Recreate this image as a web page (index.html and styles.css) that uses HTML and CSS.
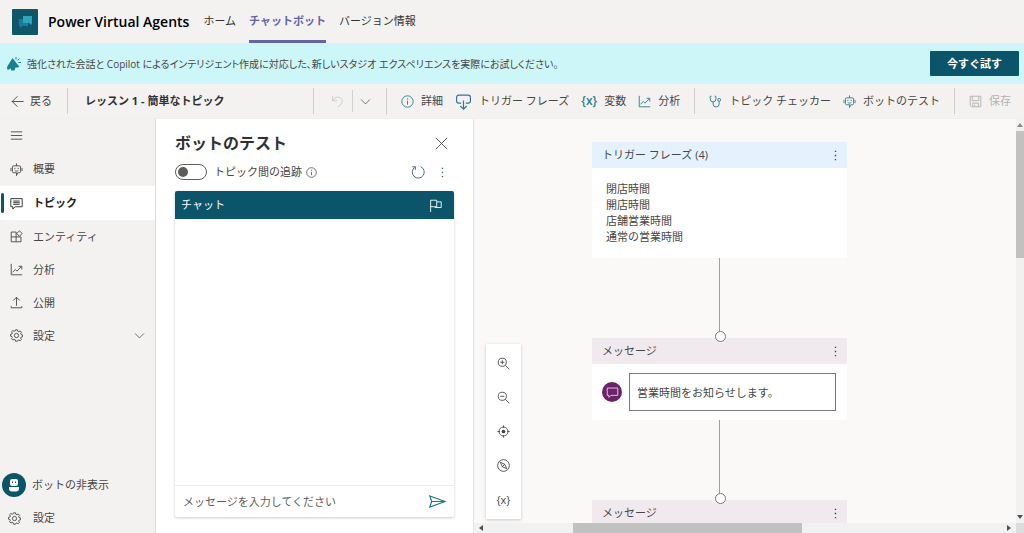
FILE: index.html
```html
<!DOCTYPE html>
<html lang="ja">
<head>
<meta charset="utf-8">
<meta name="viewport" content="width=device-width, initial-scale=1">
<title>Power Virtual Agents</title>
<link rel="stylesheet" href="styles.css">
</head>
<body>
<svg class="sprite" aria-hidden="true">
  <symbol id="i-back" viewBox="0 0 16 16"><path d="M15.500 8H1M8 1.500 1.500 8 8 14.500"/></symbol>
  <symbol id="i-undo" viewBox="0 0 16 16"><path d="M2 1.500v5.500h5.500M2.200 6.800C5 2.500 9 1.800 11.500 3.500c3 2 3 5.500.8 7.700L8.500 15"/></symbol>
  <symbol id="i-down" viewBox="0 0 16 16"><path d="m1.500 5 6.500 6.500L14.500 5"/></symbol>
  <symbol id="i-info" viewBox="0 0 16 16"><circle cx="8" cy="8" r="7"/><path d="M8 7v5M8 4v1.500"/></symbol>
  <symbol id="i-trigger" viewBox="0 0 16 16"><path d="M5.800 9.500H3.500a2 2 0 0 1-2-2V4a2 2 0 0 1 2-2h9a2 2 0 0 1 2 2v3.500a2 2 0 0 1-2 2h-2.300M8 7v8M5 12.200l3 3 3-3"/></symbol>
  <symbol id="i-chart" viewBox="0 0 16 16"><path d="M1.500 1v13.500H15M3 11.500 6.500 8l2 2 5.500-5.500M10.500 4H14.500v4"/></symbol>
  <symbol id="i-check" viewBox="0 0 16 16"><path d="M3 1.500H1.500V5a3.500 3.500 0 0 0 7 0V1.500H7M5 8.500v2.500a3.700 3.700 0 0 0 7.500 0V8"/><circle cx="12.500" cy="6" r="1.800"/></symbol>
  <symbol id="i-bot" viewBox="0 0 16 16"><path d="M8 .5v3M4.500 3.500h7a1.500 1.500 0 0 1 1.500 1.500v5.500a1.500 1.500 0 0 1-1.500 1.500H9.500L8 15.500V12H4.500A1.500 1.500 0 0 1 3 10.500V5a1.500 1.500 0 0 1 1.500-1.500ZM1.200 6v4M14.800 6v4M6 6v1.500M10 6v1.500M5.800 9.300c1.300.9 3 .9 4.400 0"/></symbol>
  <symbol id="i-save" viewBox="0 0 16 16"><path d="M1.500 1.500h13v13H3l-1.500-1.500ZM4 1.500V7h8V1.500M4.500 14.500V10h7v4.500M7 12v2.500"/></symbol>
  <symbol id="i-menu" viewBox="0 0 16 16"><path d="M1 3.500h14M1 8h14M1 12.500h14"/></symbol>
  <symbol id="i-topic" viewBox="0 0 16 16"><path d="M1 2h14v10H6.500L3.500 14.800V12H1ZM4 5h8M4 7h8M4 9h8"/></symbol>
  <symbol id="i-entity" viewBox="0 0 16 16"><path d="M7.500 2.500h-6v12h12V8.500M1.500 8.500h12M7.500 2.500v12M11.500 1 15 4.300l-3.500 3.500L8.300 4.300Z"/></symbol>
  <symbol id="i-publish" viewBox="0 0 16 16"><path d="M8 12V1.500M4 5.500l4-4 4 4M1.500 12.500v2h13v-2"/></symbol>
  <symbol id="i-gear" viewBox="0 0 16 16"><path d="M6.800 1h2.400l.4 1.900 1.300.5 1.600-1 1.600 1.700-1 1.600.5 1.200 1.900.4v2.300l-1.900.4-.5 1.300 1 1.600-1.600 1.600-1.600-1-1.300.5L9.200 15H6.800l-.4-1.900-1.300-.5-1.600 1-1.600-1.700 1-1.600L2.400 9.200.6 8.800V6.600l1.800-.4L2.900 5l-1-1.600 1.600-1.600 1.600 1 1.300-.5Z"/><circle cx="8" cy="8" r="2.600"/></symbol>
  <symbol id="i-close" viewBox="0 0 16 16"><path d="m1 1 14 14M15 1 1 15"/></symbol>
  <symbol id="i-refresh" viewBox="0 0 16 16"><path d="M4.500 2.500A6.800 6.800 0 1 0 11 1.900M1.500 2h3.500v3.500"/></symbol>
  <symbol id="i-dots" viewBox="0 0 16 16"><path class="solid" d="M7 1h2v2H7zM7 7h2v2H7zM7 13h2v2H7z"/></symbol>
  <symbol id="i-flag" viewBox="0 0 16 16"><path d="M2 16V1.500h7.500v8H2M9.500 3.500H15v7H7.500v-1"/></symbol>
  <symbol id="i-send" viewBox="0 0 16 16"><path d="M.8 2.800 15.200 8 .8 13.200 2.500 8ZM2.500 8h12"/></symbol>
  <symbol id="i-zoomin" viewBox="0 0 16 16"><circle cx="6.500" cy="6.500" r="5"/><path d="m10.200 10.200 5 5M4 6.500h5M6.500 4v5"/></symbol>
  <symbol id="i-zoomout" viewBox="0 0 16 16"><circle cx="6.500" cy="6.500" r="5"/><path d="m10.200 10.200 5 5M4 6.500h5"/></symbol>
  <symbol id="i-target" viewBox="0 0 16 16"><circle cx="8" cy="8" r="5.500"/><circle class="solid" cx="8" cy="8" r="2.300"/><path d="M8 .5v3M8 12.500v3M.5 8h3M12.500 8h3"/></symbol>
  <symbol id="i-compass" viewBox="0 0 16 16"><circle cx="8" cy="8" r="7.200"/><path d="m4 4 5.500 2.500L12 12 6.500 9.500ZM6.500 9.500l3-3"/></symbol>
  <symbol id="i-message" viewBox="0 0 16 16"><path d="M1.500 2.500h13v9H6L3.500 14v-2.500h-2Z"/></symbol>
</svg>

<header class="topbar">
  <svg class="logo" viewBox="0 0 26 26" aria-hidden="true"><rect class="logo-bg" width="26" height="26" rx="1"/><path class="logo-back" d="M7 10h9v7h-6l-2 2v-2H7z"/><path class="logo-front" d="M11 7h9v7l-1 2-2-2h-6z"/></svg>
  <h1 class="brand">Power Virtual Agents</h1>
  <nav class="tabs">
    <a href="#home">ホーム</a>
    <a href="#bots" class="current" aria-current="page">チャットボット</a>
    <a href="#about">バージョン情報</a>
  </nav>
</header>

<section class="banner">
  <svg class="horn" viewBox="0 0 16 16" aria-hidden="true"><path d="M6.500 2 13.500 11 5 12.500 1.500 14 1 11Z"/><path d="M5 12v2.500h3.500l1-3"/><path class="rays" d="M10 3.500V1M11.500 4.500 13.500 2.500M12.500 6.500H15"/></svg>
  <p>強化された会話と Copilot によるインテリジェント作成に対応した、新しいスタジオ エクスペリエンスを実際にお試しください。</p>
  <button class="primary" type="button">今すぐ試す</button>
</section>

<div class="toolbar">
  <button class="tool back" type="button"><svg class="icon"><use href="#i-back"/></svg>戻る</button>
  <h2 class="doc-title">レッスン 1 - 簡単なトピック</h2>
  <div class="history">
    <button class="tool undo" type="button" aria-label="元に戻す"><svg class="icon"><use href="#i-undo"/></svg></button>
    <button class="tool more" type="button" aria-label="履歴"><svg class="icon small"><use href="#i-down"/></svg></button>
  </div>
  <div class="group">
    <button class="tool" type="button"><svg class="icon teal"><use href="#i-info"/></svg>詳細</button>
    <button class="tool" type="button"><svg class="icon large teal"><use href="#i-trigger"/></svg>トリガー フレーズ</button>
    <button class="tool" type="button"><span class="braces">{x}</span>変数</button>
    <button class="tool" type="button"><svg class="icon teal"><use href="#i-chart"/></svg>分析</button>
  </div>
  <div class="group">
    <button class="tool" type="button"><svg class="icon teal"><use href="#i-check"/></svg>トピック チェッカー</button>
    <button class="tool" type="button"><svg class="icon teal"><use href="#i-bot"/></svg>ボットのテスト</button>
  </div>
  <div class="group">
    <button class="tool" type="button" disabled><svg class="icon"><use href="#i-save"/></svg>保存</button>
  </div>
</div>

<div class="workspace">
  <nav class="sidebar">
    <button class="side menu" type="button" aria-label="メニュー"><svg class="icon"><use href="#i-menu"/></svg></button>
    <a class="side tall" href="#overview"><svg class="icon"><use href="#i-bot"/></svg>概要</a>
    <a class="side tall active" href="#topics" aria-current="page"><svg class="icon"><use href="#i-topic"/></svg>トピック</a>
    <a class="side" href="#entities"><svg class="icon"><use href="#i-entity"/></svg>エンティティ</a>
    <a class="side" href="#analytics"><svg class="icon"><use href="#i-chart"/></svg>分析</a>
    <a class="side" href="#publish"><svg class="icon"><use href="#i-publish"/></svg>公開</a>
    <a class="side" href="#manage"><svg class="icon"><use href="#i-gear"/></svg>設定<svg class="icon small end"><use href="#i-down"/></svg></a>
    <div class="side-foot">
      <button class="side hide-bot" type="button"><svg class="avatar" viewBox="0 0 24 24"><circle cx="12" cy="12" r="12"/><rect class="face" x="8" y="6" width="8" height="7" rx="2"/><path class="face" d="M7 14h10v1.500a3 3 0 0 1-3 3h-4a3 3 0 0 1-3-3z"/><path class="eyes" d="M10 8.500h1v1.500h-1zM13 8.500h1v1.500h-1z"/></svg>ボットの非表示</button>
      <a class="side" href="#settings"><svg class="icon"><use href="#i-gear"/></svg>設定</a>
    </div>
  </nav>

  <section class="tester">
    <div class="tester-head">
      <h2>ボットのテスト</h2>
      <button class="ghost" type="button" aria-label="閉じる"><svg class="icon"><use href="#i-close"/></svg></button>
    </div>
    <div class="track">
      <input class="switch" id="track" type="checkbox" role="switch">
      <label for="track">トピック間の追跡</label>
      <svg class="icon info"><use href="#i-info"/></svg>
      <button class="ghost refresh" type="button" aria-label="リセット"><svg class="icon"><use href="#i-refresh"/></svg></button>
      <button class="ghost dots" type="button" aria-label="その他"><svg class="icon small"><use href="#i-dots"/></svg></button>
    </div>
    <div class="chat">
      <div class="chat-head"><h3>チャット</h3><button class="ghost" type="button" aria-label="フラグ"><svg class="icon"><use href="#i-flag"/></svg></button></div>
      <div class="chat-log"></div>
      <form class="composer">
        <input type="text" placeholder="メッセージを入力してください" aria-label="メッセージ">
        <button class="ghost send" type="button" aria-label="送信"><svg class="icon large"><use href="#i-send"/></svg></button>
      </form>
    </div>
  </section>

  <main class="stage">
    <div class="canvas">
      <div class="palette">
        <button class="ghost" type="button" aria-label="拡大"><svg class="icon"><use href="#i-zoomin"/></svg></button>
        <button class="ghost" type="button" aria-label="縮小"><svg class="icon"><use href="#i-zoomout"/></svg></button>
        <button class="ghost" type="button" aria-label="中央"><svg class="icon"><use href="#i-target"/></svg></button>
        <button class="ghost" type="button" aria-label="ミニマップ"><svg class="icon"><use href="#i-compass"/></svg></button>
        <button class="ghost var" type="button">{x}</button>
      </div>
      <div class="flow">
        <article class="node">
          <header class="node-head blue"><h3>トリガー フレーズ (4)</h3><button class="ghost" type="button" aria-label="その他"><svg class="icon small"><use href="#i-dots"/></svg></button></header>
          <ul class="phrases"><li>閉店時間</li><li>開店時間</li><li>店舗営業時間</li><li>通常の営業時間</li></ul>
        </article>
        <div class="link"></div>
        <article class="node">
          <header class="node-head"><h3>メッセージ</h3><button class="ghost" type="button" aria-label="その他"><svg class="icon small"><use href="#i-dots"/></svg></button></header>
          <div class="message">
            <span class="badge"><svg class="icon"><use href="#i-message"/></svg></span>
            <input type="text" value="営業時間をお知らせします。" aria-label="メッセージ本文">
          </div>
        </article>
        <div class="link"></div>
        <article class="node">
          <header class="node-head"><h3>メッセージ</h3><button class="ghost" type="button" aria-label="その他"><svg class="icon small"><use href="#i-dots"/></svg></button></header>
        </article>
      </div>
    </div>
    <div class="bar vertical" aria-hidden="true"><i class="arrow up"></i><i class="thumb"></i><i class="arrow down"></i></div>
    <div class="bar horizontal" aria-hidden="true"><i class="arrow left"></i><i class="thumb"></i><i class="arrow right"></i></div>
    <div class="corner"></div>
  </main>
</div>
</body>
</html>
```

FILE: styles.css
```css
* { box-sizing: border-box; }

body {
  margin: 0;
  height: 100vh;
  display: flex;
  flex-direction: column;
  overflow: hidden;
  background: #f3f2f1;
  color: #484644;
  font: 11px/16px "Open Sans", "Noto Sans CJK JP", sans-serif;
}

h1, h2, h3, p, ul { margin: 0; padding: 0; font-size: inherit; font-weight: 400; }
ul { list-style: none; }
a { color: inherit; text-decoration: none; }
button, input { font: inherit; color: inherit; }
button { border: 0; background: none; padding: 0; }

.sprite { display: none; }
.icon {
  width: 13px;
  height: 13px;
  flex: none;
  display: block;
  fill: none;
  stroke: currentColor;
  stroke-width: 1.1;
}
.icon.small { width: 11px; height: 11px; }
.icon.large { width: 17px; height: 17px; }
.icon.teal { color: #2c7c8b; }
.solid { fill: currentColor; stroke: none; }
.ghost { display: grid; place-items: center; }

/* Top bar */
.topbar { flex: none; height: 43px; display: flex; align-items: center; padding: 0 12px; }
.logo { width: 26px; height: 26px; }
.logo-bg { fill: #0e5668; }
.logo-back { fill: #137f9c; }
.logo-front { fill: #2ba6c2; }
.brand { margin: 0 14px 0 10px; font-size: 14px; font-weight: 600; color: #000; }
.tabs { align-self: stretch; display: flex; gap: 13px; }
.tabs a { display: flex; align-items: center; border-bottom: 3px solid transparent; border-top: 1px solid transparent; color: #323130; }
.tabs .current { color: #6264a7; font-weight: 700; border-bottom-color: #6264a7; }

/* Banner */
.banner {
  flex: none;
  height: 41px;
  display: flex;
  align-items: center;
  padding: 0 5px 0 6px;
  background: #cdf6f8;
  font-size: 10px;
}
.horn { width: 16px; height: 16px; margin-right: 5px; fill: #16828c; }
.horn .rays { fill: none; stroke: #16828c; }
.banner p { flex: 1; font-feature-settings: "palt"; }
.primary {
  width: 89px;
  height: 25px;
  border-radius: 1px;
  background: #0b556a;
  color: #fff;
  font-size: 11px;
  font-weight: 700;
}

/* Toolbar */
.toolbar { flex: none; height: 34px; display: flex; align-items: center; padding-right: 13px; }
.tool { display: flex; align-items: center; gap: 7px; white-space: nowrap; }
.tool:disabled { color: #b3b0ad; }
.back { width: 67px; padding-left: 11px; gap: 6px; }
.doc-title {
  flex: 1;
  height: 26px;
  line-height: 26px;
  padding-left: 17px;
  border-left: 1px solid #d2d0ce;
  font-weight: 700;
  color: #323130;
}
.history { display: flex; align-items: center; height: 26px; border-left: 1px solid #d2d0ce; }
.undo { color: #c8c6c4; padding: 0 8px 0 17px; }
.more { height: 22px; padding: 0 15px 0 7px; border-left: 1px solid #d2d0ce; }
.group { display: flex; align-items: center; gap: 12px; height: 26px; padding: 0 14px; border-left: 1px solid #d2d0ce; }
.group:last-child { padding-right: 0; }
.braces { color: #2c7c8b; font-weight: 600; font-size: 12px; }

/* Workspace */
.workspace { flex: 1; min-height: 0; display: flex; border-top: 1px solid #f0efee; }

.sidebar { flex: none; width: 156px; display: flex; flex-direction: column; border-right: 1px solid #dddbd9; }
.side { flex: none; position: relative; width: 100%; height: 33px; display: flex; align-items: center; gap: 10px; padding: 0 10px; text-align: left; }
.side.tall { height: 34px; }
.side .end { margin-left: auto; }
.side.active { background: #fff; font-weight: 700; color: #252423; }
.side.active::before { content: ""; position: absolute; left: 1px; top: 7px; bottom: 7px; width: 3px; border-radius: 2px; background: #0b556a; }
.side-foot { margin-top: auto; }
.side-foot .side { height: 30px; padding-left: 8px; gap: 12px; }
.side-foot .hide-bot { height: 36px; padding-left: 2px; gap: 6px; }
.avatar { width: 24px; height: 24px; fill: #0b556a; }
.avatar .face { fill: #fff; }

/* Test panel */
.tester { flex: none; width: 318px; display: flex; flex-direction: column; padding: 13px 19px 16px; background: #fff; border-right: 1px solid #e6e4e2; }
.tester-head { display: flex; align-items: center; justify-content: space-between; height: 22px; padding-right: 6px; }
.tester-head h2 { font-size: 16px; font-weight: 700; color: #323130; }
.track { display: flex; align-items: center; height: 36px; margin-bottom: 1px; padding-right: 6px; }
.track label { margin: 0 4px 0 7px; }
.icon.info { width: 11px; height: 11px; }
.refresh { margin: 0 12px 0 auto; color: #40697a; }
.refresh .icon { width: 14px; height: 14px; }
.dots { color: #40697a; }
.switch {
  appearance: none;
  width: 32px;
  height: 16px;
  margin: 0;
  padding: 2px;
  border: 1px solid #605e5c;
  border-radius: 8px;
  background: #fff;
}
.switch::before { content: ""; display: block; width: 10px; height: 10px; border-radius: 50%; background: #605e5c; }
.chat { flex: 1; display: flex; flex-direction: column; box-shadow: 0 1px 3px #0003; border-radius: 2px; }
.chat-head { display: flex; align-items: center; justify-content: space-between; height: 28px; padding: 0 12px 0 6px; background: #0b556a; color: #fff; border-radius: 2px 2px 0 0; }
.chat-log { flex: 1; }
.composer { display: flex; align-items: center; height: 32px; padding: 0 8px; border-top: 1px solid #edebe9; }
.composer input { flex: 1; min-width: 0; border: 0; padding: 0; background: none; outline: 0; }
.composer input::placeholder { color: #605e5c; opacity: 1; }
.send { color: #15798a; }

/* Authoring canvas */
.stage { flex: 1; min-width: 0; display: grid; grid-template: minmax(0, 1fr) 10px / minmax(0, 1fr) 8px; background: #faf9f8; }
.canvas { position: relative; overflow: hidden; padding: 23px 0 0 118px; }
.palette {
  position: absolute;
  left: 12px;
  bottom: 4px;
  width: 35px;
  height: 175px;
  padding: 2px 0;
  display: grid;
  grid-auto-rows: 1fr;
  background: #fff;
  box-shadow: 0 1px 3px #0003;
}
.var { font-size: 11px; }
.flow { width: 255px; }
.node { background: #fff; border-radius: 2px; }
.node-head { display: flex; align-items: center; justify-content: space-between; height: 26px; padding: 0 6px 0 10px; background: #f0eaef; }
.node-head.blue { background: #e5f2fd; }
.phrases { padding: 13px 14px; }
.link { position: relative; width: 1px; height: 80px; margin: 0 auto; background: #a19f9d; }
.link::after { content: ""; position: absolute; left: -4px; bottom: -4px; width: 9px; height: 9px; border: 1px solid #797775; border-radius: 50%; background: #fff; }
.message { display: flex; align-items: center; gap: 7px; padding: 9px 11px 9px 10px; }
.badge { flex: none; display: grid; place-items: center; width: 20px; height: 20px; border-radius: 50%; background: #6b2268; color: #e8d5e8; }
.message input { flex: 1; min-width: 0; height: 38px; padding: 0 7px; border: 1px solid #797775; background: #fff; }

.bar { display: flex; align-items: center; background: #f1f1f1; }
.vertical { flex-direction: column; justify-content: space-between; padding: 4px 0; }
.vertical .thumb { width: 100%; height: 32%; margin: 4px 0 auto; background: #c1c1c1; }
.horizontal { padding: 0 5px; }
.horizontal .thumb { width: 43%; height: 100%; margin: 0 auto 0 17%; background: #c1c1c1; }
.corner { background: #dcdcdc; }
.arrow { border: 3px solid transparent; }
.arrow.up { border-top: 0; border-bottom: 4px solid #8a8a8a; }
.arrow.down { border-bottom: 0; border-top: 4px solid #505050; }
.arrow.left { border-left: 0; border-right: 4px solid #505050; }
.arrow.right { border-right: 0; border-left: 4px solid #505050; }
```
